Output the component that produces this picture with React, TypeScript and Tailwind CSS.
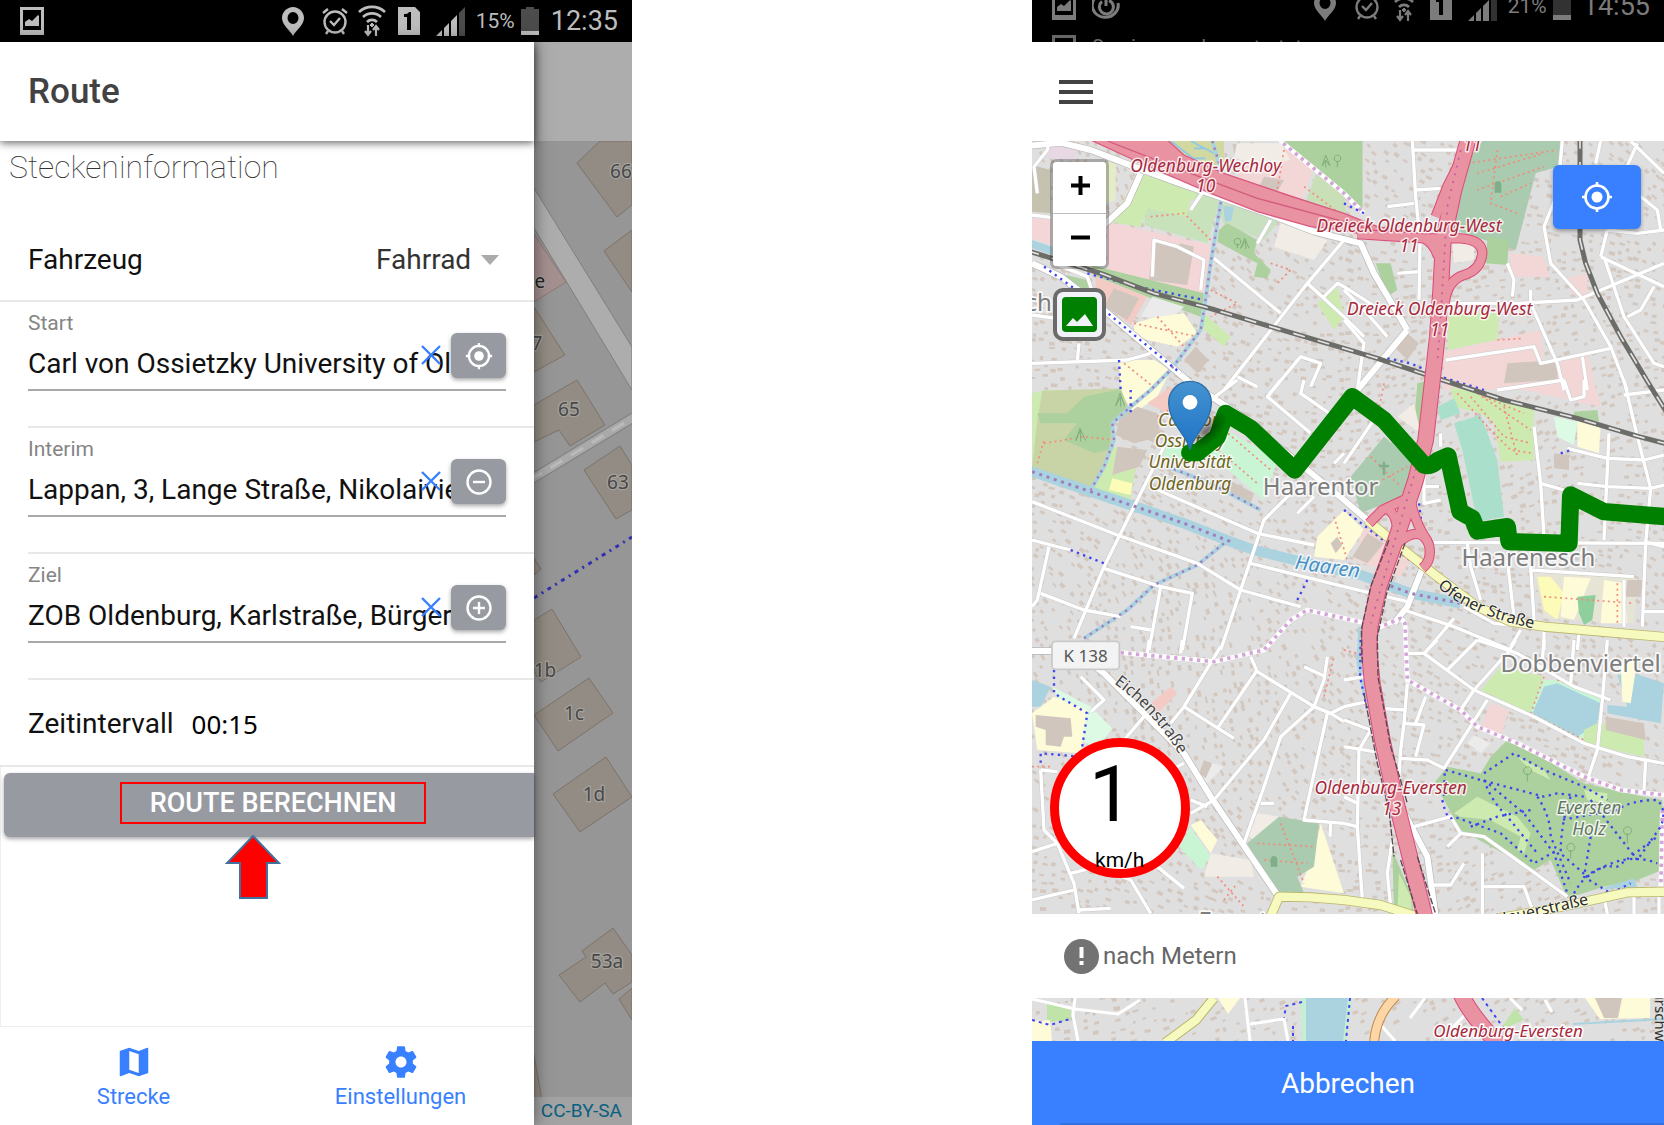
import React from "react";

/* ---------- Status bar ---------- */

const PictureIcon = () => (
  <svg width="24" height="28" viewBox="0 0 24 28" fill="currentColor">
    <path fillRule="evenodd" d="M0 0h24v28H0zM3 3v20h18V3z" />
    <path d="M5 19v-4l4-3 3 2 6-6 1 1v10z" />
  </svg>
);

const TimerIcon = () => (
  <svg width="28" height="30" viewBox="0 0 28 30" fill="none" stroke="currentColor" strokeWidth="3">
    <path d="M20 4a13 12 0 1 0 6 8" />
    <path d="M17 9.500a7 7 0 1 1-7 1" />
    <path d="M14 5v10" />
  </svg>
);

const StatusIcons = ({ percent, time, level }: { percent: string; time: string; level: number }) => (
  <div className="flex items-center">
    <svg width="22" height="30" viewBox="0 0 22 30" fill="currentColor">
      <path fillRule="evenodd" d="M11 1C5 1 0 6 0 12c0 7 8 12 11 18 3-6 11-11 11-18C22 6 17 1 11 1zm0 5a5.500 6 0 1 1 0 12 5.500 6 0 0 1 0-12z" />
    </svg>
    <svg className="ml-[18px]" width="26" height="28" viewBox="0 0 26 28" fill="none" stroke="currentColor" strokeWidth="2.400">
      <circle cx="13" cy="15" r="10.500" />
      <path d="M8 14l4 4 6-7M1 6l5-4M25 6l-5-4M6 24l-2 3M20 24l2 3" />
    </svg>
    <svg className="ml-2.5" width="28" height="32" viewBox="0 0 28 32" fill="none" stroke="currentColor" strokeWidth="2.600">
      <path d="M1 7a19 19 0 0 1 26 0M5 12a13 13 0 0 1 18 0M9 17a7 7 0 0 1 10 0" />
      <path d="M14 18l2 2-2 2-2-2z" fill="currentColor" strokeWidth="1" />
      <path d="M10 20v9M7 26l3 4 3-4M18 31v-9M15 25l3-4 3 4" strokeWidth="2.200" />
    </svg>
    <svg className="ml-3" width="22" height="28" viewBox="0 0 22 28" fill="currentColor">
      <path fillRule="evenodd" d="M0 0h17l5 5v23H0zM6 7v3h3v13h4V5h-2c-1 2-3 2-5 2z" />
    </svg>
    <svg className="ml-4" width="30" height="30" viewBox="0 0 30 30" fill="currentColor">
      <path d="M0 30l6-6v6zM8 22l5-5v13H8zM15 15l6-6v21h-6z" />
      <path d="M23 7l6-6v29h-6z" opacity=".4" />
    </svg>
    <span className="ml-2.5 text-[21px] leading-7">{percent}</span>
    <svg className="ml-1.5" width="18" height="28" viewBox="0 0 18 28" fill="currentColor">
      <path d="M5 0h8v2h5v26H0V2h5z" opacity=".4" />
      <rect y={28 - level} width="18" height={level} />
    </svg>
    <span className="ml-3 text-[27px] leading-8">{time}</span>
  </div>
);

/* ---------- Shared icons ---------- */

const LocateIcon = ({ size }: { size: number }) => (
  <svg width={size} height={size} viewBox="0 0 32 32" fill="none" stroke="white" strokeWidth="2.600">
    <circle cx="16" cy="16" r="11.500" />
    <circle cx="16" cy="16" r="5.500" fill="white" stroke="none" />
    <path d="M16 1v5M16 26v5M1 16h5M26 16h5" />
  </svg>
);

const RoundIcon = ({ plus }: { plus?: boolean }) => (
  <svg width="28" height="28" viewBox="0 0 28 28" fill="none" stroke="white" strokeWidth="2.400">
    <circle cx="14" cy="14" r="11.500" />
    <path d={plus ? "M8 14h12M14 8v12" : "M8 14h12"} />
  </svg>
);

/* ---------- Drawer form ---------- */

const Field = ({ id, label, value, action, icon }: { id: string; label: string; value: string; action: string; icon: React.ReactNode }) => (
  <div className="ml-7 border-b-2 border-[#e8e8e8] pt-[7px] pr-7 pb-[35px]">
    <label htmlFor={id} className="block text-[21px] leading-7 text-[#858585]">
      {label}
    </label>
    <div className="flex border-b-2 border-[#a8a8a8]">
      <div className="relative min-w-0 flex-1">
        <input id={id} defaultValue={value} className="block h-[52px] w-full bg-transparent text-[28px] text-[#111] outline-none" />
        <button aria-label={`${label} löschen`} className="absolute top-2 right-2.5">
          <svg width="20" height="20" viewBox="0 0 20 20" stroke="#3880ff" strokeWidth="2.400">
            <path d="M1 1l18 18M19 1L1 19" />
          </svg>
        </button>
      </div>
      <button aria-label={action} className="-mt-1 flex h-[45px] w-[55px] items-center justify-center rounded-md bg-[#989aa2] shadow-[0_2px_4px_rgba(0,0,0,0.35)]">
        {icon}
      </button>
    </div>
  </div>
);

const houses = [
  "577,163 600,141 632,141 632,205 617,217",
  "604,251 632,230 632,292",
  "534,307 565,355 534,372",
  "534,405 577,380 605,425 570,446 559,430 534,442",
  "584,470 620,446 632,465 632,510 616,519",
  "534,558 541,569 534,575",
  "534,620 552,609 581,657 541,682 534,672",
  "534,715 589,678 613,713 558,751",
  "553,794 606,757 632,797 580,832",
  "559,975 586,957 582,951 613,928 632,955 632,982 613,994 605,983 580,1002",
  "619,999 632,988 632,1020",
  "534,1055 542,1100 534,1100",
];
const numbers: [number, number, string][] = [
  [621, 178, "66"], [537, 350, "7"], [569, 416, "65"], [618, 489, "63"], [545, 677, "1b"],
  [574, 720, "1c"], [594, 801, "1d"], [607, 968, "53a"],
];

const DimmedMap = () => (
  <svg className="absolute inset-0 h-full w-full" viewBox="534 141 98 984" preserveAspectRatio="xMaxYMid slice" fontFamily="Noto Sans, sans-serif">
    <rect x="434" y="41" width="298" height="1184" fill="#969696" />
    <path d="M534 188L632 347V390L534 228z" fill="#adadad" stroke="#7f7f7f" />
    <path d="M534 234L566 282L534 302z" fill="#a59090" stroke="#8f7878" />
    <path d="M530 480L636 416" stroke="#808080" strokeWidth="10" />
    <path d="M530 480L636 416" stroke="#a9a9a9" strokeWidth="8" />
    <path d="M530 480L636 416" stroke="#bababa" strokeWidth="3" strokeDasharray="14 10" />
    {houses.map((p) => (
      <polygon key={p} points={p} fill="#938c84" stroke="#7d736a" />
    ))}
    <path d="M534 598L632 537" stroke="#3030b0" strokeWidth="3" strokeDasharray="4 5 2 5" />
    <g fontSize="19" fill="#484848" stroke="#a5a29e" strokeWidth="2.500" paintOrder="stroke" textAnchor="middle">
      {numbers.map(([x, y, t]) => (
        <text key={t} x={x} y={y}>{t}</text>
      ))}
      <text x="540" y="288" fill="#222">e</text>
    </g>
  </svg>
);

/* ---------- City map ---------- */

type Tile = [number, number, string[]];

const streets: Tile[] = [
  [0, 0, [
    "570,385 770,550", "960,330 850,460 600,780", "850,460 960,560 1020,620", "24,555 165,575", "24,700 310,690 380,670",
    "165,640 160,690", "740,270 700,340", "900,500 940,460 960,470 1100,560", "730,800 830,680 890,700 860,770",
    "500,240 540,180", "385,440 390,330 460,350 540,390 530,480", "24,255 80,262", "40,190 30,110 70,60 75,33", "640,740 700,770",
    "90,400 190,440 210,500 180,530",
  ]],
  [960, 0, [
    "205,33 215,200 228,330 225,510", "205,60 340,60", "215,180 290,175", "0,480 60,540 130,620", "310,520 520,520 700,510 960,400",
    "305,690 570,650 590,700 800,655", "560,480 560,520 640,700 660,780", "490,400 510,450 505,500", "655,33 640,190 600,290 620,400 720,510 800,650 850,780",
    "860,33 960,130", "880,40 840,130", "770,380 960,470", "790,300 770,380", "790,300 880,310 960,300", "890,200 940,240 950,300",
    "780,380 840,560 930,700 960,710", "930,470 890,540 850,560", "715,680 730,780", "460,780 660,750", "770,33 755,100", "0,570 60,640 40,780",
    "130,230 210,220", "160,430 225,425",
  ]],
  [0, 750, [
    "24,365 280,465 520,550 650,630 830,680", "420,200 330,380 240,560 150,775", "390,325 700,460 870,495", "800,340 720,420 650,630 590,810",
    "680,550 960,620", "24,480 140,510", "75,500 40,660 24,680", "50,640 180,690 290,710", "240,565 410,620 505,640 475,810", "410,620 375,810",
    "320,740 380,750", "770,0 730,50 860,160", "840,0 830,40 930,110", "870,350 820,400", "960,220 930,250", "560,60 640,0",
  ]],
  [960, 750, [
    "0,250 110,90", "240,280 240,370 290,360", "240,320 285,320", "290,160 290,200", "570,140 590,310 600,470", "270,487 960,490", "590,310 660,330",
    "700,310 790,320 920,325 960,315", "795,160 780,480", "840,0 880,170 920,325 905,490 895,740", "670,205 790,235 900,240 960,225",
    "660,0 680,60 720,50 720,0", "370,490 380,560 410,660", "490,540 510,710", "560,560 570,720", "560,570 870,590", "180,690 330,740 500,810",
    "360,680 450,730 600,745", "530,750 500,800", "0,620 190,665", "330,715 250,810", "600,750 600,810", "705,760 700,810", "840,600 840,740",
    "900,695 960,695", "840,45 960,30", "960,500 900,485",
  ]],
  [0, 1530, [
    "170,110 240,180 200,215", "300,300 360,230", "590,20 480,200 440,250", "480,200 630,295", "700,90 580,265", "680,50 700,95 870,200 920,220 960,200",
    "800,160 720,300 570,480 500,520", "910,50 900,120 870,200 770,290 720,440 660,610", "910,220 870,400 840,540 960,550", "840,80 905,110",
    "375,0 370,40", "475,0 470,40", "50,390 60,570 100,610", "50,390 100,395", "100,610 150,730 165,820", "24,635 100,610", "24,780 150,750", "165,810 260,805",
    "140,700 220,680 320,720 380,820", "400,680 480,745", "500,480 550,500", "920,550 918,590", "920,220 960,245", "710,490 750,490", "420,400 480,370",
  ]],
  [960, 1530, [
    "190,40 240,40 390,150 570,230 720,310 850,350 960,370", "280,0 240,40", "400,0 310,90", "400,0 520,40 690,140 800,180", "480,50 390,150 350,210",
    "430,180 300,385 250,360 165,355", "0,200 70,185", "110,205 185,210", "190,130 180,250 170,330 160,480", "180,250 240,255 215,350", "245,170 215,250",
    "0,240 80,270 45,330 40,560 55,780", "0,320 90,335", "790,0 775,180 760,330 730,420", "690,0 680,130", "905,360 900,450",
    "210,560 320,530 350,580 420,590 560,690 670,770", "350,580 310,620", "270,735 320,735 360,670", "415,640 415,822",
    "415,740 540,740 570,822", "0,470 40,490", "0,550 40,560", "145,600 130,700 140,800", "945,740 945,822", "870,770 870,822", "515,0 490,40", "600,0 595,60",
    "780,770 790,822", "0,120 60,110",
  ]],
];

const areas: [string, string][] = [
  ["#c6c2b0", "24,105 80,120 80,250 24,245"],
  ["#e8d8e4", "60,40 160,50 150,90 75,85"],
  ["#e4edc8", "245,95 275,100 275,210 245,220"],
  ["#cdebb0", "345,130 560,190 500,210 490,260 370,240 350,290 255,275 300,210"],
  ["#c8e2bb", "370,235 490,260 520,185 590,200 550,340 360,285"],
  ["#f5d6d8", "250,275 560,345 540,490 250,420"],
  ["#d1c6bd", "390,335 460,350 470,340 510,350 490,465 375,450"],
  ["#f3d7d7", "640,120 790,50 870,110 830,220 650,190"],
  ["#d1c6bd", "720,140 780,150 760,185 705,170"],
  ["#f2ece6", "640,40 770,40 800,90 700,110 630,80"],
  ["#add19e", "770,33 1015,33 1015,240 960,190 860,100"],
  ["#c8dfb8", "880,120 960,190 970,280 840,230"],
  ["#d2d9a0", "400,33 600,33 600,110 500,90"],
  ["#c8e0c0", "570,210 770,265 720,330 600,285"],
  ["#add19e", "585,300 610,280 700,330 690,370 740,420 730,445 690,440 700,400 580,335"],
  ["#aad3df", "598,228 630,230 622,272 603,275"],
  ["#f2ece6", "770,280 910,330 870,390 750,350"],
  ["#add19e", "200,405 540,490 530,560 380,505 220,440"],
  ["#add19e", "100,430 190,450 200,480 160,470"],
  ["#cdebb0", "540,550 620,620 600,650 530,590"],
  ["#ebebeb", "350,560 385,500 480,530 440,570"],
  ["#fdfbd8", "330,580 400,560 480,550 520,610 460,650 330,620"],
  ["#aad3df", "24,330 85,350 85,375 24,355"],
  ["#f5d6d8", "24,265 80,270 80,345 24,325"],
  ["#f3cbc4", "215,440 370,500 320,585 215,500"],
  ["#d1c6bd", "270,475 345,505 310,570 240,530"],
  ["#fdfbd8", "285,690 390,690 440,720 400,800 330,850 290,790"],
  ["#d1c6bd", "515,650 555,690 520,730 480,690"],
  ["#cdebb0", "880,520 940,470 960,560 930,600"],
  ["#aacbaf", "1375,33 1615,33 1600,110 1535,130 1475,360 1290,300 1310,120"],
  ["#add19e", "1390,320 1455,330 1450,405 1385,400"],
  ["#f2ece6", "1285,330 1350,345 1350,390 1290,400"],
  ["#add19e", "960,33 1015,33 1015,240 960,200"],
  ["#add19e", "1055,400 1100,400 1120,480 1090,500"],
  ["#cdebb0", "1275,545 1425,550 1420,630 1270,660"],
  ["#f3d7d7", "1260,665 1550,600 1560,700 1690,670 1730,830 1500,780 1260,780"],
  ["#f3d7d7", "1460,370 1560,380 1575,440 1460,440"],
  ["#f3d7d7", "1630,445 1690,430 1690,510 1640,490"],
  ["#d1c6bd", "1450,700 1600,690 1600,750 1440,760"],
  ["#d1c6bd", "1150,610 1185,640 1150,690 1110,650"],
  ["#add19e", "1180,760 1220,750 1190,900 1170,880"],
  ["#f2ece6", "1170,820 1190,910 1120,860"],
  ["#cdebb0", "24,790 60,780 250,780 320,850 265,880 270,950 340,980 320,1110 210,1080 24,1010"],
  ["#c8d4a6", "55,782 290,775 320,850 265,880 270,950 210,1075 24,1010 40,870"],
  ["#add19e", "40,850 130,850 180,800 290,778 310,840 262,880 255,960 210,970 120,930 160,880 50,880"],
  ["#d1c6bd", "285,870 340,830 400,850 410,920 330,940 275,915"],
  ["#d1c6bd", "280,950 370,960 345,1010 265,1035"],
  ["#fdfbb8", "265,1045 325,1060 320,1095 255,1080"],
  ["#f3cbc4", "370,820 440,770 560,790 560,860 430,850"],
  ["#c9f5d5", "590,890 760,990 720,1110 600,1010 520,960"],
  ["#c9f5d5", "430,930 500,960 470,1000 400,970"],
  ["#d1c6bd", "615,1050 690,1090 680,1120 610,1080"],
  ["#fdfbd8", "960,1140 1020,1200 960,1290 870,1280 880,1220"],
  ["#d1c6bd", "940,1220 955,1245 935,1270 920,1240"],
  ["#aacbaf", "1080,920 1175,1000 1130,1100 1010,1150 980,1040"],
  ["#f3d7d7", "1020,1190 1090,1240 1160,1290 1130,1340 990,1290"],
  ["#d1c6bd", "1030,1210 1080,1240 1030,1300 985,1280"],
  ["#cdebb0", "1280,770 1530,830 1530,990 1430,995 1410,880 1370,850 1290,830"],
  ["#aae0cb", "1290,880 1370,855 1420,990 1440,1160 1360,1175 1315,960"],
  ["#aae0cb", "1240,830 1290,805 1310,850 1250,870"],
  ["#add19e", "1650,845 1720,840 1725,875 1650,865"],
  ["#dcfae4", "1590,860 1660,875 1650,945 1600,920"],
  ["#fdfbd8", "1660,870 1730,880 1725,970 1660,950"],
  ["#d1c6bd", "1590,970 1635,975 1635,1020 1590,1015"],
  ["#e6e4d4", "1530,1330 1840,1345 1830,1480 1560,1465"],
  ["#fdfbb8", "1540,1340 1580,1340 1620,1390 1600,1470 1560,1440"],
  ["#fdfbd8", "1620,1340 1700,1345 1650,1470 1610,1460"],
  ["#fdfbd8", "1740,1350 1800,1360 1810,1480 1730,1480"],
  ["#d1c6bd", "1810,1350 1855,1350 1850,1400 1805,1400"],
  ["#8fcf9e", "1660,1400 1715,1395 1705,1470 1680,1485 1665,1450"],
  ["#aad3df", "24,1650 80,1670 50,1730 24,1730"],
  ["#dcfae4", "85,1670 200,1730 265,1795 220,1855 150,1820"],
  ["#fdfbd8", "24,1750 90,1700 190,1740 170,1870 40,1860"],
  ["#d1c6bd", "35,1755 140,1765 145,1820 120,1820 110,1850 65,1845 65,1800 35,1790"],
  ["#f3cbc4", "380,1720 440,1670 460,1690 400,1750"],
  ["#ebebeb", "540,1890 600,1910 550,1960 530,1940"],
  ["#d1c6bd", "540,1890 565,1900 545,1945 525,1930"],
  ["#f2ece6", "700,2050 765,2060 700,2140 675,2120"],
  ["#fdfbd8", "870,2170 890,2080 960,2290 830,2270"],
  ["#aacbaf", "765,2060 885,2080 870,2210 820,2240 840,2290 750,2285 670,2140"],
  ["#c9f5d5", "465,2150 500,2090 560,2180 530,2220"],
  ["#fdfbd8", "500,2085 530,2070 580,2130 560,2170"],
  ["#f2ece6", "560,2170 680,2190 690,2240 540,2240"],
  ["#cdebb0", "1370,1680 1430,1610 1560,1640 1520,1750"],
  ["#c9f5d5", "1560,1650 1600,1650 1740,1700 1730,1810 1680,1830 1515,1755"],
  ["#aad3df", "1560,1670 1600,1660 1730,1720 1720,1780 1660,1820 1525,1750"],
  ["#aad3df", "1780,1635 1830,1630 1920,1660 1910,1780 1750,1750 1750,1725 1810,1730"],
  ["#fdfbd8", "1790,1600 1840,1590 1820,1720 1795,1715"],
  ["#cdebb0", "1680,1800 1720,1780 1860,1790 1860,1880 1680,1840"],
  ["#d1c6bd", "1745,1760 1860,1780 1865,1830 1745,1800"],
  ["#f3d7d7", "1400,1720 1455,1740 1430,1820 1365,1800"],
  ["#ebebeb", "1350,1815 1400,1840 1370,1870 1330,1840"],
  ["#add19e", "1450,1830 1520,1860 1680,1960 1860,2000 1915,2010 1915,2220 1840,2250 1740,2270 1630,2305 1580,2190 1530,2220 1310,2100 1260,2010 1230,1960 1270,1910 1370,1930 1400,1880"],
  ["#cdebb0", "1290,2050 1360,2000 1480,2060 1520,2110 1500,2170 1480,2160 1490,2120 1400,2070 1310,2060"],
  ["#cdebb0", "1480,1880 1560,1920 1580,1950 1520,1920"],
  ["#cdebb0", "1680,1980 1750,1990 1750,2020 1690,2010"],
  ["#aad3df", "1720,2280 1830,2245 1840,2270"],
  ["#add19e", "1105,2160 1160,2290 1170,2352 1110,2352"],
  ["#cdebb0", "1125,2230 1160,2300 1165,2352 1120,2352"],
];

const seeded = (seed: number) => () => {
  seed = (seed * 16807) % 2147483647;
  return seed / 2147483647;
};

const block = (x: number, y: number, w: number, h: number, a: number) => {
  const c = Math.cos(a);
  const s = Math.sin(a);
  const p = (u: number, v: number) => `${(x + u * c - v * s).toFixed(0)} ${(y + u * s + v * c).toFixed(0)}`;
  return `M${p(-w / 2, -h / 2)}L${p(w / 2, -h / 2)}L${p(w / 2, h / 2)}L${p(-w / 2, h / 2)}z`;
};

const scatter = (x0: number, y0: number, x1: number, y1: number, step: number, size: number, seed: number) => {
  const r = seeded(seed);
  let d = "";
  for (let y = y0; y < y1; y += step)
    for (let x = x0; x < x1; x += step) {
      const a = 0.4 + Math.sin(x / 300) * 0.5 + Math.cos(y / 260) * 0.5;
      if (r() > 0.3) d += block(x + r() * step * 0.6, y + r() * step * 0.6, size * (0.6 + r() * 0.7), size * (0.4 + r() * 0.4), a);
    }
  return d;
};

const buildings = scatter(24, 33, 1920, 2352, 27, 15, 77);

const Line = ({ d, c, w, dash }: { d: string; c: string; w: number; dash?: string }) => (
  <path d={d} fill="none" stroke={c} strokeWidth={w} strokeDasharray={dash} strokeLinejoin="round" />
);

const motorway = "M1335 20L1290 180L1258 330L1250 480L1240 620L1222 780L1205 930L1175 1050L1120 1215L1065 1370L1038 1490L1035 1560L1045 1660L1075 1830L1110 1990L1150 2150L1205 2370";
const ramps = "M1325 60L1270 170L1235 260M1000 312L1200 325H1310Q1375 330 1375 370Q1370 420 1320 435Q1270 450 1262 520M1200 325Q1230 340 1242 380M1160 1100L1075 1140L1035 1180M1120 1235Q1125 1150 1085 1135M1120 1240Q1190 1180 1215 1245Q1225 1290 1195 1315M1155 1080Q1165 1170 1212 1235";
const railways = "M10 362L230 430L390 490L540 530L740 590L960 655L1060 685L1240 745L1440 810L1660 865L1845 920L1930 942M1668 20V330L1685 400L1720 490L1790 620L1880 770L1930 850";
const yellowRoads = "M1030 1170L1120 1245L1240 1340L1360 1430L1460 1475L1560 1490L1930 1522M735 2370L765 2300L860 2302L960 2310L1070 2325L1180 2360M1420 2365L1540 2345L1660 2320L1810 2287L1930 2285";
const mainRoads = "M10 48L110 38L200 60L330 110L480 165L600 205L760 262L870 305L1010 340L1050 430L1150 600M350 130L310 220L240 285M24 400L110 440L240 540L500 760L640 850L850 1020L960 1110L1030 1170M200 1600L240 1630L480 1870L560 2000L760 2295M10 1563H90M1195 1315L1150 1430L1110 1480M1120 2010L1210 2180L1235 2360M1150 600L1000 780";
const streams = "M565 33L600 150L590 220L560 400L540 540L530 600L440 720L380 780L320 830L265 880L270 930L240 1010L200 1080M600 1240L520 1305L390 1365L310 1440L180 1525M430 1010L560 1060L710 1140";
const boundary = "M290 1568L570 1595L720 1560L800 1470L850 1440L960 1465L1070 1490L1130 1465L1143 1480L1150 1650L1310 1740L1360 1790L1480 1840L1680 1940L1790 1980L1920 1995M1915 2040L1910 2300M760 25L960 190L1020 250";
const footpaths = "M1265 1920L1370 1950L1560 2000L1600 1990L1680 2000M1380 1930L1470 1870L1560 1920L1680 1970L1750 2010M1380 1950Q1400 2010 1450 2060L1540 2170M1380 1950Q1440 2000 1500 2050L1590 2170L1630 2290M1255 2010Q1270 2080 1290 2060L1430 2110L1530 2200L1600 2160M1540 2000Q1580 2060 1580 2120L1640 2260M1640 2000Q1610 2080 1610 2170L1690 2240Q1800 2160 1900 2200M1700 2010L1840 2190L1910 2090Q1930 2040 1900 2010Q1820 2010 1780 2040L1610 2070M1650 2290Q1700 2200 1780 2210L1900 2120M1700 2120L1680 2240L1760 2290L1820 2260M1262 1930L1260 2010M1340 2090L1420 2060L1520 2040M190 430L340 470L540 510M60 410L240 540L470 730M1090 685L1160 700L1250 740L1380 780M1610 970L1640 960M140 1260L240 1300M850 1350L820 1410M90 1620L90 1690L190 1750L170 1880L50 1870L50 1910M285 690L290 780M1185 1120L1195 1200L1230 1260M1010 1530L1008 1640L1030 1740M960 1140L1090 1240L1240 1350M1560 1500L1920 1530M320 780L320 850M960 220L1020 250";
const redPaths = "M380 260L480 250L560 330M1360 130L1560 70M1360 180L1560 110M1420 60L1400 220L1480 250M1330 100L1600 60M1430 200L1520 160M1300 790L1400 900L1460 960L1530 970M1340 800L1440 920L1520 940M1360 790L1520 900M1440 830L1480 980M1380 800L1500 850M1020 1080L1150 1010M1040 980L1130 1070M60 940L180 920L270 930M40 1000L60 930M330 580L520 620M400 560L480 650M300 700L400 780M600 900L740 1020M560 940L700 1060M700 2140L870 2150M720 2190L850 2200M770 2080L840 2260M1560 1640L1520 1750L1680 1830M1600 1650L1740 1700M840 170L960 260M780 60L760 180M930 1160L970 1290M1560 1400L1830 1420M1780 1360L1780 1480M560 480L640 520L560 560M740 400L800 420L760 460M400 860L500 800M1420 630L1500 625M580 2240L660 2330M600 2310L640 2260M24 1910H80M900 1700L930 1580M960 1560L1000 1570M1080 760L1060 860";

const CityMap = () => (
  <svg className="absolute inset-0 h-full w-full" viewBox="24 33 1896 2319" preserveAspectRatio="xMidYMid slice" fontFamily="Noto Sans, sans-serif">
    <defs>
      <path id="ofener" d="M1240 1370Q1330 1458 1560 1502" />
      <path id="eichen" d="M270 1660Q400 1755 475 1890" />
      <linearGradient id="pin" x1="0" y1="0" x2="0" y2="1">
        <stop offset="0" stopColor="#4593cf" />
        <stop offset="1" stopColor="#1f72c8" />
      </linearGradient>
      <radialGradient id="pinShade">
        <stop offset="0" stopColor="#000" stopOpacity=".5" />
        <stop offset="1" stopColor="#000" stopOpacity="0" />
      </radialGradient>
    </defs>
    <rect x="-500" y="-500" width="3000" height="3400" fill="#e0dfdf" />
    <path d={buildings} fill="#d3c8bf" />
    {areas.map(([fill, points]) => (
      <polygon key={points} points={points} fill={fill} />
    ))}
    <Line d={redPaths} c="#f48a7c" w={5} dash="6 10" />
    <Line d="M400 33L470 90M440 33L540 110M500 33L570 70M510 55H540M510 85H545" c="#8cc8ec" w={5} />
    <g fill="none" stroke="#7fae78" strokeWidth="3">
      <path d="M905 112V90L895 108L905 75L918 108L905 90M940 112V95M940 75a10 10 0 1 0 1 0M640 355V340M640 325a10 10 0 1 0 1 0M665 358V330L650 355L662 325L675 355M1510 1955V1930M1510 1910a12 12 0 1 0 1 0M1640 2185V2160M1640 2140a12 12 0 1 0 1 0M1810 2140V2110M1810 2090a12 12 0 1 0 1 0M170 935V900L155 932L168 895L185 932M290 830V800L275 828L288 790L302 828" />
    </g>
    <path d="M1412 188V165a10 12 0 0 1 20 0V188zM740 2210V2190a10 12 0 0 1 20 0V2210z" fill="#7fae8a" />
    <path d="M1080 1035V995M1065 1008H1095" stroke="#7fae8a" strokeWidth="7" />
    <Line d={streams} c="#aad3df" w={12} />
    <Line d="M10 1020L200 1085L320 1125L480 1180L620 1235L690 1260L850 1300L1010 1335L1160 1390L1310 1420" c="#aad3df" w={31} />
    <Line d="M1010 1490L1005 1600L1025 1700" c="#aad3df" w={14} />
    {streets.map(([x, y, lines], i) => (
      <g key={i} transform={`translate(${x} ${y})`}>
        {lines.map((l) => <Line key={l} d={`M${l}`} c="#cbcbcb" w={13} />)}
      </g>
    ))}
    <Line d={mainRoads} c="#b8b8b8" w={22} />
    {streets.map(([x, y, lines], i) => (
      <g key={i} transform={`translate(${x} ${y})`}>
        {lines.map((l) => <Line key={l} d={`M${l}`} c="#fff" w={10} />)}
      </g>
    ))}
    <Line d={mainRoads} c="#fff" w={18} />
    <Line d={streams} c="#a07cc0" w={7} dash="7 14" />
    <Line d="M24 1025L200 1085L320 1125L480 1180L620 1235M1100 1368L1160 1390L1310 1420" c="#a07cc0" w={9} dash="9 14" />
    <Line d={boundary} c="#fff" w={14} />
    <Line d={boundary} c="#d3a5d8" w={11} dash="10 13" />
    <Line d={footpaths} c="#3f46f0" w={7} dash="7 13" />
    <Line d={railways} c="#6c6d69" w={15} />
    <Line d={railways} c="#e4e4e4" w={5} dash="36 40" />
    <Line d={yellowRoads} c="#b9b56c" w={30} />
    <Line d={yellowRoads} c="#f7fabf" w={25} />
    <path d="M200 30H430L480 75L600 130L790 195L960 250L1060 290L1200 312V330L1060 325L960 300L860 290L700 245L560 190L330 90z" fill="#e892a2" stroke="#dc5a80" strokeWidth="4" />
    <path d="M250 33L500 130L700 205L960 275L1060 305" fill="none" stroke="#d35c7e" strokeWidth="4" />
    <Line d={ramps} c="#dc4a78" w={31} />
    <Line d={motorway} c="#dc4a78" w={50} />
    <Line d={ramps} c="#e892a2" w={25} />
    <Line d={motorway} c="#e892a2" w={44} />
    <Line d="M1310 60L1270 230L1255 480L1240 700M1190 970L1110 1240L1040 1480" c="#c55aa0" w={5} dash="6 18" />
    <Line d="M1095 1230L1040 1370L1012 1500L1015 1600M1143 1240L1088 1390L1060 1520L1062 1640L1100 1850L1150 2020M1020 1690L1060 1900L1095 2040L1110 2180M1130 2190L1180 2352M1180 2180L1235 2352" c="#5c4650" w={4} dash="20 6" />

    <g fontStyle="italic" fontSize="52" fill="#a8283c" stroke="#fff" strokeOpacity=".8" strokeWidth="9" strokeLinejoin="round" paintOrder="stroke" textAnchor="middle">
      <text x="545" y="125">Oldenburg-Wechloy</text>
      <text x="545" y="187">10</text>
      <text x="1155" y="305">Dreieck Oldenburg-West</text>
      <text x="1155" y="367">11</text>
      <text x="1247" y="555">Dreieck Oldenburg-West</text>
      <text x="1247" y="617">11</text>
      <text x="1345" y="62">11</text>
      <text x="1100" y="1993">Oldenburg-Eversten</text>
      <text x="1103" y="2055">13</text>
      <g fill="#6f6420">
        <text x="498" y="888">Carl von</text>
        <text x="498" y="950">Ossietzky</text>
        <text x="498" y="1015">Universität</text>
        <text x="498" y="1080">Oldenburg</text>
      </g>
      <g fill="#62755f">
        <text x="1695" y="2052">Eversten</text>
        <text x="1695" y="2115">Holz</text>
      </g>
      <text x="908" y="1330" fontSize="60" fill="#4b8fc4" transform="rotate(8 908 1330)">Haaren</text>
    </g>
    <g fontSize="72" fill="#7d7d7d" stroke="#fff" strokeOpacity=".8" strokeWidth="11" strokeLinejoin="round" paintOrder="stroke" textAnchor="middle">
      <text x="44" y="543">ch</text>
      <text x="890" y="1095">Haarentor</text>
      <text x="1513" y="1307">Haarenesch</text>
      <text x="1670" y="1625">Dobbenviertel</text>
      <text x="670" y="2396">Eversten</text>
    </g>
    <g fontSize="48" fill="#2c2c2c" stroke="#fff" strokeOpacity=".6" strokeWidth="6" strokeLinejoin="round" paintOrder="stroke">
      <text><textPath href="#ofener">Ofener Straße</textPath></text>
      <text fill="#444"><textPath href="#eichen">Eichenstraße</textPath></text>
      <text x="1420" y="2386" transform="rotate(-13 1420 2386)">Hauerstraße</text>
    </g>
    <rect x="84" y="1534" width="202" height="84" rx="10" fill="#f3f3f3" stroke="#c9c9c9" strokeWidth="5" />
    <text x="185" y="1595" fontSize="51" fill="#555" textAnchor="middle">K 138</text>

    <Line d="M495 968H520L580 920L605 850L680 895L812 1020L985 800L1080 870L1200 1005Q1220 1012 1240 992L1272 978L1308 1145L1345 1165L1360 1203L1450 1190L1455 1235L1635 1240L1640 1095L1740 1145L1940 1161" c="#008000" w={52} />
    <circle cx="497" cy="968" r="26" fill="#008000" />
    <ellipse cx="550" cy="900" rx="75" ry="38" fill="url(#pinShade)" transform="rotate(-45 550 900)" />
    <path d="M498 960C490 915 434 880 434 817a64 63 0 0 1 128 0C562 880 506 915 498 960z" fill="url(#pin)" stroke="#2a6ea8" strokeWidth="4" />
    <circle cx="498" cy="817" r="22" fill="#fff" />
  </svg>
);

const lowerBuildings = scatter(1032, 998, 1664, 1045, 10, 5, 19);

const LowerMap = () => (
  <svg className="absolute inset-0 h-full w-full" viewBox="1032 998 632 43" preserveAspectRatio="xMidYMid slice" fontFamily="Noto Sans, sans-serif">
    <rect x="900" y="900" width="900" height="260" fill="#e0dfdf" />
    <path d={lowerBuildings} fill="#d3c8bf" />
    <path d="M1047 1003L1071 1010V1020L1047 1022zM1515 1008L1524 1020L1500 1030z" fill="#bfe3a8" />
    <path d="M1032 1021L1050 1020L1052 1041H1032zM1218 998H1240L1228 1014zM1585 998H1650V1018L1600 1019z" fill="#fdfbd8" />
    <path d="M1595 998H1622L1618 1018H1604z" fill="#d1c6bd" />
    <path d="M1300 998H1352L1346 1041H1302z" fill="#c4efd2" />
    <path d="M1306 998H1348L1343 1041H1306z" fill="#aad3df" />
    <path d="M1573 1024L1664 1019" stroke="#aad3df" strokeWidth="2" />
    <g fill="none" stroke="#fff" strokeWidth="3">
      <path d="M1032 999L1075 1009L1118 1014L1140 1000M1075 998L1073 1015L1078 1041M1245 998L1250 1041M1250 1024L1284 1019L1288 1041M1425 998L1410 1018M1380 1024L1395 1041M1510 998L1522 1010M1470 1010L1448 1032M1545 1000L1552 1012" />
    </g>
    <path d="M1214 998L1196 1020L1165 1043" fill="none" stroke="#b9b56c" strokeWidth="10" />
    <path d="M1214 998L1196 1020L1165 1043" fill="none" stroke="#f7fabf" strokeWidth="8" />
    <path d="M1396 996Q1376 1015 1374 1043" fill="none" stroke="#c08a50" strokeWidth="10" />
    <path d="M1396 996Q1376 1015 1374 1043" fill="none" stroke="#fcd6a4" strokeWidth="8" />
    <path d="M1460 992Q1470 1015 1502 1048" fill="none" stroke="#dc4a78" strokeWidth="17" />
    <path d="M1460 992Q1470 1015 1502 1048" fill="none" stroke="#e892a2" strokeWidth="15" />
    <path d="M1350 998L1346 1041M1302 1002L1286 1006L1284 1018M1293 1026V1041M1482 998L1505 1030M1032 1020L1050 1025L1070 1019" fill="none" stroke="#3f46f0" strokeWidth="2" strokeDasharray="3 4" />
    <text x="1508" y="1037" fontSize="17" fontStyle="italic" textAnchor="middle" fill="#a8283c" stroke="#fff" strokeWidth="3" paintOrder="stroke">Oldenburg-Eversten</text>
    <text x="1655" y="996" fontSize="15" fill="#333" transform="rotate(90 1655 996)">irschw</text>
  </svg>
);

/* ---------- Screens ---------- */

const RouteScreen = () => (
  <section className="flex flex-col">
    <div className="flex h-[42px] items-center justify-between bg-black pr-3.5 pl-5 text-[#bdbdbd]">
      <PictureIcon />
      <StatusIcons percent="15%" time="12:35" level={4} />
    </div>
    <div className="flex flex-1">
      <div className="relative z-10 flex w-[84.5%] flex-col bg-white shadow-[0_0_16px_rgba(0,0,0,0.5)]">
        <header className="flex h-[99px] items-center px-7 shadow-[0_2px_8px_rgba(0,0,0,0.6)]">
          <h1 className="text-[35px] leading-10 font-medium text-[#424242]">Route</h1>
        </header>
        <h2 className="px-[9px] pt-2 pb-8 text-[32px] leading-9 font-thin text-[#333]">Steckeninformation</h2>
        <div className="flex h-[85px] items-center justify-between border-b-2 border-[#e8e8e8] px-7 pt-0.5 text-[28px]">
          <label htmlFor="vehicle" className="text-[#111]">Fahrzeug</label>
          <div className="relative flex items-center">
            <select id="vehicle" className="appearance-none bg-transparent pr-[34px] text-[#333] outline-none">
              <option>Fahrrad</option>
            </select>
            <svg className="pointer-events-none absolute right-[7px]" width="18" height="10" viewBox="0 0 18 10" fill="#ababab">
              <path d="M0 0h18L9 10z" />
            </svg>
          </div>
        </div>
        <Field id="start" label="Start" value="Carl von Ossietzky University of Oldenburg" action="Standort verwenden" icon={<LocateIcon size={28} />} />
        <Field id="interim" label="Interim" value="Lappan, 3, Lange Straße, Nikolaiviertel" action="Zwischenziel entfernen" icon={<RoundIcon />} />
        <Field id="ziel" label="Ziel" value="ZOB Oldenburg, Karlstraße, Bürgerfelde" action="Zwischenziel hinzufügen" icon={<RoundIcon plus />} />
        <div className="flex h-[87px] items-center gap-[18px] border-b-2 border-[#e8e8e8] px-7 pt-0.5 text-[28px] text-[#111]">
          <span>Zeitintervall</span>
          <span className="font-['Noto_Sans',sans-serif] text-[26px] leading-9 text-black">00:15</span>
        </div>
        <div className="flex-1 border-b border-l border-[#eee]">
          <button className="mt-1.5 ml-[3px] flex h-16 w-[calc(100%-3px)] items-center justify-center rounded-l-md bg-[#989aa2] pb-1 pl-2 shadow-[0_2px_4px_rgba(0,0,0,0.35)]">
            <span className="border-2 border-[#f00] px-7 py-0.5 text-[27px] leading-[34px] font-medium text-white">ROUTE BERECHNEN</span>
          </button>
          <svg className="relative -mt-0.5 ml-[42%]" width="56" height="64" viewBox="0 0 56 64">
            <path d="M28 1L54 28H42V63H15V28H2z" fill="#f00" stroke="#41719c" strokeWidth="2" />
          </svg>
        </div>
        <nav className="grid h-[98px] grid-cols-2 text-[22px] leading-7 text-[#3880ff]">
          <a href="#strecke" className="flex flex-col items-center pt-4">
            <svg width="38" height="38" viewBox="0 0 24 24" fill="currentColor">
              <path d="M20.500 3l-.16.030L15 5.100 9 3 3.360 4.900c-.21.070-.36.250-.36.480V20.500c0 .280.220.500.500.500l.16-.030L9 18.900l6 2.100 5.640-1.900c.21-.070.360-.250.360-.480V3.500c0-.280-.220-.500-.500-.500zM15 19l-6-2.110V5l6 2.110V19z" />
            </svg>
            <span className="mt-0.5">Strecke</span>
          </a>
          <a href="#einstellungen" className="flex flex-col items-center pt-4">
            <svg width="38" height="38" viewBox="0 0 24 24" fill="currentColor">
              <path d="M19.430 12.980c.040-.320.070-.640.070-.980s-.030-.660-.070-.980l2.110-1.650c.190-.150.240-.420.120-.640l-2-3.460c-.120-.220-.390-.300-.610-.220l-2.490 1c-.520-.400-1.080-.730-1.690-.980l-.380-2.650C14.460 2.180 14.250 2 14 2h-4c-.250 0-.460.180-.490.420l-.380 2.650c-.610.250-1.170.590-1.690.980l-2.490-1c-.230-.090-.490 0-.610.220l-2 3.460c-.130.220-.070.490.120.640l2.110 1.650c-.040.320-.070.650-.070.980s.030.660.070.980l-2.110 1.650c-.190.150-.240.420-.120.640l2 3.460c.120.220.390.300.610.220l2.490-1c.520.400 1.080.730 1.690.980l.380 2.650c.030.240.240.420.490.420h4c.250 0 .460-.180.490-.420l.380-2.650c.610-.250 1.170-.590 1.690-.980l2.490 1c.230.090.490 0 .610-.220l2-3.460c.120-.220.070-.490-.120-.640l-2.110-1.650zM12 15.500c-1.930 0-3.500-1.570-3.500-3.500s1.570-3.500 3.500-3.500 3.500 1.570 3.500 3.500-1.570 3.500-3.500 3.500z" />
            </svg>
            <span className="mt-0.5">Einstellungen</span>
          </a>
        </nav>
      </div>
      <div className="flex min-w-0 flex-1 flex-col">
        <div className="h-[99px] bg-[#adadad]" />
        <div className="relative flex flex-1 flex-col justify-end overflow-hidden">
          <DimmedMap />
          <div className="relative flex h-7 items-center justify-end bg-[#a3a3a3] pr-2.5 text-[19px] whitespace-nowrap">
            <a href="#lizenz" className="text-[#0b5f7f]">CC-BY-SA</a>
          </div>
        </div>
      </div>
    </div>
  </section>
);

const NavigationScreen = () => (
  <section className="col-start-3 flex flex-col">
    <div className="relative h-[42px] overflow-hidden bg-black text-[#7c7c7c]">
      <div className="-mt-[15px] flex h-[42px] items-center justify-between pr-3.5 pl-5">
        <div className="flex items-center gap-4">
          <PictureIcon />
          <TimerIcon />
        </div>
        <StatusIcons percent="21%" time="14:55" level={5} />
      </div>
      <div className="flex items-start gap-4 pt-2 pl-5 text-[#666]">
        <PictureIcon />
        <span className="text-xl leading-6">Service wurde gestartet</span>
      </div>
    </div>
    <header className="flex h-[99px] items-center pl-[27px]">
      <button aria-label="Menü">
        <svg width="34" height="24" viewBox="0 0 34 24" fill="#424242">
          <path d="M0 0h34v4H0zM0 10h34v4H0zM0 20h34v4H0z" />
        </svg>
      </button>
    </header>
    <div className="relative min-h-[773px] flex-1 overflow-hidden">
      <CityMap />
      <div className="absolute top-[18px] left-[18px] flex flex-col rounded-md border-[3px] border-black/25 bg-clip-padding">
        <button aria-label="Vergrößern" className="flex h-[52px] w-[53px] items-center justify-center rounded-t-sm border-b border-[#bbb] bg-white pb-1 pl-0.5">
          <svg width="19" height="19" viewBox="0 0 19 19" stroke="#000" strokeWidth="4"><path d="M9.500 0v19M0 9.500h19" /></svg>
        </button>
        <button aria-label="Verkleinern" className="flex h-[52px] w-[53px] items-center justify-center rounded-b-sm bg-white pb-1 pl-0.5">
          <svg width="19" height="19" viewBox="0 0 19 19" stroke="#000" strokeWidth="4"><path d="M0 8.500h19" /></svg>
        </button>
      </div>
      <button aria-label="Kartenbild" className="absolute top-[147px] left-[21px] flex h-[53px] w-[53px] items-center justify-center rounded-[10px] border-4 border-[#6b6b6b] bg-[#f1f1f8]">
        <svg width="35" height="35" viewBox="0 0 35 35">
          <rect width="35" height="35" rx="4" fill="#008000" />
          <path d="M4 29l7-8 4 4 8-8 8 12z" fill="#f1f1f8" />
        </svg>
      </button>
      <button aria-label="Zum Standort" className="absolute top-6 right-[23px] flex h-16 w-[88px] items-center justify-center rounded-md bg-[#3880ff] shadow-[0_2px_4px_rgba(0,0,0,0.35)]">
        <LocateIcon size={32} />
      </button>
      <div className="absolute bottom-9 left-[18px] h-[140px] w-[140px] rounded-full border-[9px] border-[#f00] bg-white text-black">
        <span className="absolute top-2 left-[30px] text-[78px] leading-[80px]">1</span>
        <span className="absolute top-[99px] left-9 text-[21px] leading-7">km/h</span>
      </div>
    </div>
    <div className="flex h-[84px] items-center gap-1 pl-8 text-[24px] text-[#666]">
      <svg width="35" height="35" viewBox="0 0 35 35">
        <circle cx="17.500" cy="17.500" r="17.500" fill="#737373" />
        <path d="M15.500 8h4v11h-4zM15.500 22h4v4h-4z" fill="#fff" />
      </svg>
      <span>nach Metern</span>
    </div>
    <div className="relative h-[43px] overflow-hidden">
      <LowerMap />
    </div>
    <button className="flex h-[84px] items-center justify-center bg-[#3880ff] pt-0.5 text-[28px] text-white">Abbrechen</button>
    <div className="-mt-0.5 ml-7 h-0.5 bg-[#3171e0]" />
  </section>
);

export default function App() {
  return (
    <main className="grid min-h-screen grid-cols-[79fr_50fr_79fr] bg-white font-[Roboto,sans-serif]">
      <RouteScreen />
      <NavigationScreen />
    </main>
  );
}
